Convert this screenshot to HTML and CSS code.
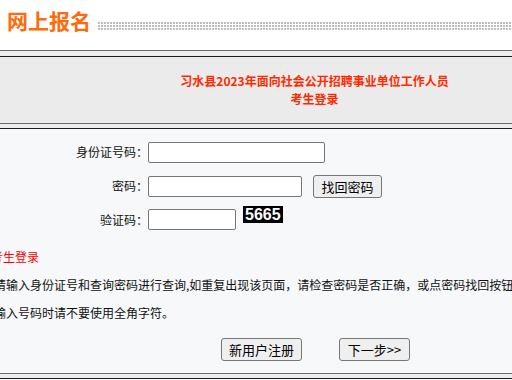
FILE: index.html
```html
<!DOCTYPE html>
<html lang="zh-CN">
<head>
<meta charset="utf-8">
<title>网上报名</title>
<link rel="stylesheet" href="styles.css">
</head>
<body>
<div class="page">
  <div class="title-bar">
    <h1 class="title">网上报名</h1>
    <div class="dots"></div>
  </div>
  <div class="rule"></div>
  <div class="banner">
    <div class="banner-text">习水县2023年面向社会公开招聘事业单位工作人员<br>考生登录</div>
  </div>
  <div class="rule rule-b"></div>
  <div class="form-area">
    <div class="form-grid">
      <label class="lbl">身份证号码：</label>
      <div class="field"><input class="in in-id" type="text"></div>
      <label class="lbl">密码：</label>
      <div class="field"><input class="in in-pw" type="password"><button class="btn btn-find" type="button">找回密码</button></div>
      <label class="lbl">验证码：</label>
      <div class="field field-top"><input class="in in-code" type="text"><span class="captcha">5665</span></div>
    </div>
    <div class="notice">考生登录</div>
    <p class="tip">请输入身份证号和查询密码进行查询,如重复出现该页面，请检查密码是否正确，或点密码找回按钮进行密码找回。</p>
    <p class="tip tip2">输入号码时请不要使用全角字符。</p>
    <div class="actions">
      <button class="btn btn-reg" type="button">新用户注册</button>
      <button class="btn btn-next" type="button">下一步&gt;&gt;</button>
    </div>
  </div>
  <div class="rule rule-b"></div>
  <div class="tail"></div>
</div>
</body>
</html>
```
FILE: styles.css
```css
html, body {
  margin: 0;
  padding: 0;
  background: #ffffff;
  overflow: hidden;
}
body {
  font-family: "Noto Sans CJK SC", "Noto Sans", sans-serif;
  font-size: 12px;
  color: #111;
}
.page {
  width: 512px;
  height: 380px;
  overflow: hidden;
}
.title-bar {
  display: flex;
  align-items: flex-start;
  height: 50px;
  background: #fff;
}
.title {
  margin: 10px 0 0 7px;
  font-size: 21px;
  line-height: 21px;
  font-weight: bold;
  color: #ff6a0a;
  white-space: nowrap;
}
.dots {
  flex: 1;
  height: 8px;
  margin: 22px 0 0 7px;
  background-color: #bdbdbd;
  background-image:
    linear-gradient(90deg, #ffffff 1px, transparent 1px),
    linear-gradient(180deg, transparent 2px, #ffffff 2px);
  background-size: 3px 3px, 3px 3px;
  background-position: 2px 0, 0 0;
}
.rule {
  height: 5px;
  border-top: 1px solid #6a6a6a;
  border-bottom: 1px solid #1e1e1e;
  background: #ededed;
}
.rule-b {
  height: 4px;
}
.banner {
  height: 66px;
  background: #ebebeb;
  display: flex;
  align-items: center;
  padding-left: 117px;
}
.banner-text {
  flex: 1;
  text-align: center;
  font-weight: bold;
  font-size: 12px;
  line-height: 18px;
  color: #ff2a00;
  white-space: nowrap;
}
.form-area {
  height: 244px;
  background: #f6f8fa;
  overflow: hidden;
}
.form-grid {
  display: grid;
  grid-template-columns: 148px 1fr;
  grid-auto-rows: 34px;
  padding-top: 6px;
}
.lbl {
  text-align: right;
  align-self: center;
  color: #111;
  line-height: 18px;
}
.field {
  display: flex;
  align-items: center;
}
.field-top {
  align-items: flex-start;
}
.in {
  box-sizing: border-box;
  height: 21px;
  margin: 0;
  padding: 1px 2px;
  border: 1px solid #767676;
  border-radius: 2px;
  background: #fff;
  font-size: 12px;
}
.in-id { width: 177px; }
.in-pw { width: 154px; }
.in-code { width: 88px; margin-top: 6px; }
.btn {
  box-sizing: border-box;
  height: 23px;
  margin: 0;
  padding: 0;
  border: 1px solid #767676;
  border-radius: 3px;
  background: #efefef;
  font-family: "Noto Sans CJK SC", "Noto Sans", sans-serif;
  font-size: 13px;
  line-height: 21px;
  color: #000;
}
.btn-find { width: 69px; margin-left: 11px; }
.captcha {
  box-sizing: border-box;
  width: 40px;
  height: 17px;
  margin: 3px 0 0 7px;
  padding: 0 2px;
  background: #000;
  color: #fff;
  font-family: "Liberation Sans", Arial, sans-serif;
  font-weight: bold;
  font-size: 16px;
  line-height: 17px;
}
.notice {
  margin: 11px 0 0 -9px;
  line-height: 18px;
  color: #ff0000;
}
.tip {
  margin: 10px 0 0 -6px;
  line-height: 18px;
  color: #111;
  white-space: nowrap;
}
.actions {
  display: flex;
  gap: 37px;
  margin-top: 16px;
  padding-left: 221px;
}
.btn-reg { width: 81px; }
.btn-next { width: 71px; }
.tail {
  height: 20px;
  background: #f6f8fa;
}
```
